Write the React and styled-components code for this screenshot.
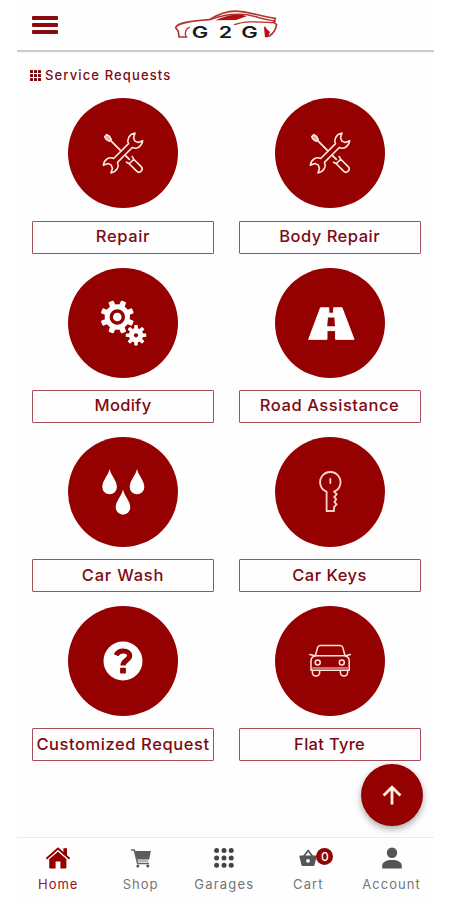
import React from "react";
import styled, { createGlobalStyle } from "styled-components";

const RED = "#950000";
const TEXT_RED = "#7d0a12";

const GlobalStyle = createGlobalStyle`
  * { box-sizing: border-box; }
  body { margin: 0; background: #fff; font-family: Inter, "Noto Sans", sans-serif; }
  button { font: inherit; border: 0; padding: 0; background: none; }
  svg { display: block; overflow: visible; }
`;

const Screen = styled.div`
  position: relative;
  width: 417px;
  height: 900px;
  margin-left: 17px;
  display: flex;
  flex-direction: column;
  background: #fefefe;
  overflow: hidden;
`;

const Header = styled.header`
  display: grid;
  grid-template-columns: 60px 1fr 60px;
  height: 52px;
  flex: none;
  padding-bottom: 1px;
  border-bottom: 2px solid #cbcbcb;
  box-shadow: 0 0 2px rgba(0, 0, 0, 0.12);
`;

const MenuButton = styled.button`
  display: flex;
  flex-direction: column;
  gap: 3.6px;
  padding: 16px 0 0 15px;
`;

const MenuBar = styled.span`
  width: 26px;
  height: 3.6px;
  border-radius: 1px;
  background: #8a0a12;
`;

const LogoBox = styled.div`
  justify-self: center;
  padding: 8px 0 0 2px;
`;

const SectionTitle = styled.h1`
  display: flex;
  align-items: center;
  gap: 4px;
  margin: 0;
  height: 46.4px;
  padding: 0 0 0 13px;
  font-size: 13px;
  font-weight: 500;
  letter-spacing: 1.13px;
  color: ${TEXT_RED};
`;

const Services = styled.main`
  display: grid;
  grid-template-columns: 182px 182px;
  column-gap: 24.6px;
  grid-auto-rows: 169.2px;
  padding-left: 15px;
  flex: 1;
`;

const Service = styled.section`
  display: flex;
  flex-direction: column;
  align-items: center;
  gap: 12.5px;
`;

const Disc = styled.button`
  display: flex;
  align-items: center;
  justify-content: center;
  width: 110px;
  height: 110px;
  border-radius: 50%;
  background: ${RED};
  color: #fff;
`;

const ServiceLabel = styled.div`
  display: flex;
  align-items: center;
  justify-content: center;
  width: 182px;
  height: 33px;
  padding-bottom: 2px;
  border: 1px solid #a5505a;
  border-radius: 1px;
  font-size: 16.5px;
  font-weight: 500;
  line-height: 1;
  white-space: nowrap;
  color: ${TEXT_RED};
  letter-spacing: ${(p) => p.$tracking}px;
`;

const UpButton = styled.button`
  position: absolute;
  left: 344px;
  top: 764px;
  width: 62px;
  height: 62px;
  display: flex;
  align-items: center;
  justify-content: center;
  border-radius: 50%;
  background: ${RED};
  box-shadow: 0 3px 7px rgba(0, 0, 0, 0.35);
`;

const TabBar = styled.nav`
  display: grid;
  grid-template-columns: 82.4px 82.4px 85px 83.2px 83.2px;
  height: 63px;
  flex: none;
  border-top: 1.5px solid #ececec;
`;

const Tab = styled.div`
  display: flex;
  flex-direction: column;
  align-items: center;
  gap: 6px;
  padding-top: 8px;
  font-size: 13px;
  line-height: 16px;
  letter-spacing: ${(p) => p.$tracking}px;
  color: ${(p) => (p.$active ? "#93141b" : "#757575")};
`;

const TabIcon = styled.div`
  position: relative;
  display: flex;
  align-items: center;
  justify-content: center;
  width: 26px;
  height: 24px;
`;

const Badge = styled.span`
  position: absolute;
  left: 21px;
  top: 2px;
  width: 17px;
  height: 17px;
  border-radius: 50%;
  background: #8e0606;
  color: #fff;
  font-size: 12px;
  font-weight: 500;
  line-height: 17px;
  letter-spacing: 0;
  text-align: center;
`;

/* Service glyphs share a frame whose origin is the middle of the disc. */
const Glyph = ({ children }) => (
  <svg width="52" height="52" viewBox="-26 -26 52 52" fill="none">
    {children}
  </svg>
);

const ToolsIcon = () => (
  <Glyph>
    <g stroke="#ffe9df" strokeWidth="1.6" strokeLinejoin="round" strokeLinecap="round">
      <g transform="rotate(45)">
        <path d="M-24.4 -1.5L-21.5 -2.2L-18 -1.3V1.3L-21.5 2.2L-24.4 1.5Z" fill="#e5a79f" />
        <path d="M-17 0H-4M4 0H9" strokeWidth="1.8" />
        <path d="M9 -4L12 -3.2H22.5A3.2 3.2 0 0 1 22.5 3.2H12L9 4M12 -3.2V3.2" />
      </g>
      <g transform="rotate(-45)">
        <path
          fill={RED}
          d="M-10.5 -2.7H10.5C12 -7 17.5 -9 22.6 -5.6L18.2 -3.3L16.8 0L18.2 3.3L22.6 5.2C17.5 9 12 7 10.5 2.7H-10.5C-12 7 -17.5 9 -22.6 5.6L-18.2 3.3L-16.8 0L-18.2 -3.3L-22.6 -5.2C-17.5 -9 -12 -7 -10.5 -2.7Z"
        />
      </g>
    </g>
  </Glyph>
);

const Gear = ({ x, y, body, reach, tooth, turn }) => (
  <g transform={`translate(${x} ${y}) rotate(${turn})`} fill="#fff">
    <circle r={body} />
    {[0, 45, 90, 135, 180, 225, 270, 315].map((angle) => (
      <rect
        key={angle}
        x={-tooth / 2}
        y={-reach}
        width={tooth}
        height={reach - body + 2}
        rx={tooth / 5}
        transform={`rotate(${angle})`}
      />
    ))}
  </g>
);

const GearsIcon = () => (
  <Glyph>
    <Gear x={-5.7} y={-6} body={12.6} reach={16.8} tooth={5.6} turn={22.5} />
    <circle cx="-5.7" cy="-6" r="6" stroke={RED} strokeWidth="3.4" />
    <Gear x={13} y={12.3} body={7.2} reach={10.2} tooth={3.6} turn={0} />
    <circle cx="13" cy="12.3" r="2.1" fill={RED} />
  </Glyph>
);

const RoadIcon = () => (
  <Glyph>
    <path
      fill="#fff"
      stroke="#fff"
      strokeWidth="1"
      strokeLinejoin="round"
      d="M-9.5 -15.2H-1.2V-9.8H3.6V-15.2H12L24 16.3H5.6V7.6H-3V16.3H-21.3Z"
    />
    <path fill={RED} d="M-2 -5.4H4.4L5 3.3H-2.8Z" />
  </Glyph>
);

const Drop = ({ x, y }) => (
  <path
    fill="#fff"
    transform={`translate(${x} ${y})`}
    d="M0 0C1.3 6.5 7.3 11.5 7.3 18A7.3 7.3 0 0 1 -7.3 18C-7.3 11.5 -1.3 6.5 0 0Z"
  />
);

const DropsIcon = () => (
  <Glyph>
    <Drop x={-13.4} y={-23} />
    <Drop x={14} y={-23} />
    <Drop x={0} y={-2.6} />
  </Glyph>
);

const KeyIcon = () => (
  <Glyph>
    <g stroke="#fbd5d0" strokeWidth="1.8" strokeLinejoin="round" strokeLinecap="round">
      <path d="M-3.4 -0.3A10.2 10.2 0 1 1 4 -0.3L6.8 2.2L4.2 5.2L6.2 7.2L4.4 10L6.6 12.4L4 15.2V19H-3.4Z" />
      <path d="M0.3 -13V-9" />
    </g>
  </Glyph>
);

const QuestionIcon = () => (
  <Glyph>
    <circle r="19.5" fill="#fff" />
    <path
      d="M-6.8 -5.8C-5.2 -9.6 -2.8 -10 0.3 -10C4 -10 6.6 -8.2 6.6 -5.2C6.6 -0.8 0 -1 0 4.6"
      stroke={RED}
      strokeWidth="5.2"
    />
    <rect x="-2.9" y="6.8" width="5.8" height="5.6" rx="0.6" fill={RED} />
  </Glyph>
);

const CarIcon = () => (
  <Glyph>
    <g stroke="#ffe4dc" strokeWidth="1.5" strokeLinejoin="round" strokeLinecap="round">
      <path d="M-14.6 -5.2L-12.4 -13.6Q-11.8 -15.6 -9.8 -15.6H10.2Q12.2 -15.6 12.8 -13.6L15 -5.2" />
      <path d="M-20.2 -6.4L-15 -5.2H15.4L20.4 -6.4" />
      <path d="M-15 -5.2Q-19 -3.8 -19 0V9.2H19.2V0Q19.2 -3.8 15.4 -5.2" />
      <path d="M-17.4 7H17.6" strokeWidth="1" />
      <path d="M-17.6 9.4V11.6Q-17.6 15 -14 15Q-10.4 15 -10.4 11.6V9.4M10.4 9.4V11.6Q10.4 15 14 15Q17.6 15 17.6 11.6V9.4" />
      <circle cx="-12.3" cy="1.4" r="2.5" />
      <circle cx="11.8" cy="1.4" r="2.5" />
    </g>
  </Glyph>
);

const Logo = () => (
  <svg width="106" height="32" viewBox="72 26 318 96" fill="none">
    <g stroke="#b5332f" strokeWidth="5" strokeLinejoin="round" strokeLinecap="round">
      <path d="M110 113H87L85 96L77 85C82 72 110 66 178 61C215 38 240 33 268 36C305 39 335 52 376 57L371 69L380 76C377 92 368 104 358 110L347 112L345 84" />
      <path d="M108 112C103 100 108 88 118 84" strokeWidth="4" />
      <path d="M180 61C232 42 285 40 330 56L376 66" strokeWidth="4" />
      <path d="M254 76C285 63 330 68 371 70" strokeWidth="4" />
    </g>
    <path fill="#b3100f" d="M196 63C222 50 250 44 278 47L290 51L258 62Z" />
    <path fill="#b3100f" d="M343 82L360 98L354 112H346Z" />
    <g fill="#1b1b1b" fontFamily="Inter, sans-serif" fontSize="48" fontWeight="600">
      <text transform="translate(125 115) scale(1.38 1)">G</text>
      <text transform="translate(206 115) scale(1.34 1)">2</text>
      <text transform="translate(274 115) scale(1.38 1)">G</text>
    </g>
  </svg>
);

const TitleGridIcon = () => (
  <svg width="11" height="11" viewBox="0 0 11 11" fill="#7d0a12">
    {[0, 4, 8].map((y) =>
      [0, 4, 8].map((x) => <rect key={`${x}-${y}`} x={x} y={y} width="3" height="3" rx="0.5" />)
    )}
  </svg>
);

const HouseIcon = () => (
  <svg width="24" height="22" viewBox="0 0 24 22" fill="none">
    <path fill={RED} d="M17.4 1.2H21V8H17.4Z" />
    <path fill={RED} d="M12 4.6L20.4 12V20.6Q20.4 21.6 19.4 21.6H14.4V14.6H9.6V21.6H4.2Q3.2 21.6 3.2 20.6V12Z" />
    <path
      d="M1 11.2L12 1.6L23 11.2"
      stroke={RED}
      strokeWidth="2"
      strokeLinecap="round"
      strokeLinejoin="round"
    />
    <path d="M2.6 12L12 3.9L21.4 12" stroke="#fefefe" strokeWidth="1" />
  </svg>
);

const CartIcon = () => (
  <svg width="22" height="20" viewBox="0 0 22 20" fill="none">
    <path d="M1 2H4.3L7.6 15.4H19" stroke="#666" strokeWidth="1.5" />
    <path d="M4.8 3H20.8L19.2 11.6H7Z" fill="#5c5c5c" />
    <path d="M6.6 13H18.4" stroke="#777" strokeWidth="1" />
    <circle cx="7.8" cy="18" r="1.5" fill="#555" />
    <circle cx="17.8" cy="18" r="1.5" fill="#555" />
  </svg>
);

const DotsIcon = () => (
  <svg width="20" height="20" viewBox="0 0 20 20" fill="#444">
    {[2.6, 10, 17.2].map((y) =>
      [2.6, 10, 17.2].map((x) => <circle key={`${x}-${y}`} cx={x} cy={y} r="2.5" />)
    )}
  </svg>
);

const BasketIcon = () => (
  <svg width="18" height="18" viewBox="0 0 18 18" fill="none">
    <path d="M4.6 7.4L9.2 1.4L13.6 7.4" stroke="#555" strokeWidth="1.7" strokeLinejoin="round" />
    <path
      fill="#555"
      d="M1.2 6.6H16.8Q17.8 6.6 17.6 7.6L15.6 15.8Q15.3 17 14 17H4Q2.7 17 2.4 15.8L0.4 7.6Q0.2 6.6 1.2 6.6Z"
    />
    <circle cx="9" cy="11.8" r="1.9" fill="#fefefe" />
  </svg>
);

const PersonIcon = () => (
  <svg width="20" height="22" viewBox="0 0 20 22" fill="#555">
    <circle cx="10" cy="5.7" r="5.2" />
    <path d="M0.2 21.4V19C0.2 14.8 4.5 13 10 13S19.8 14.8 19.8 19V21.4Z" />
  </svg>
);

const ArrowUp = () => (
  <svg width="20" height="20" viewBox="0 0 20 20" fill="none" stroke="#fff1e6" strokeWidth="2.8">
    <path d="M10 19.4V2M1.6 10.4L10 2.2L18.4 10.4" />
  </svg>
);

const services = [
  { name: "Repair", icon: ToolsIcon, tracking: 0.65 },
  { name: "Body Repair", icon: ToolsIcon, tracking: 0.5 },
  { name: "Modify", icon: GearsIcon, tracking: 0.3 },
  { name: "Road Assistance", icon: RoadIcon, tracking: 0.55 },
  { name: "Car Wash", icon: DropsIcon, tracking: 0.8 },
  { name: "Car Keys", icon: KeyIcon, tracking: 0.5 },
  { name: "Customized Request", icon: QuestionIcon, tracking: 0.57 },
  { name: "Flat Tyre", icon: CarIcon, tracking: 0.3 },
];

const tabs = [
  { name: "Home", icon: <HouseIcon />, tracking: 0.95, active: true },
  { name: "Shop", icon: <CartIcon />, tracking: 0.95 },
  { name: "Garages", icon: <DotsIcon />, tracking: 1.2 },
  { name: "Cart", icon: <BasketIcon />, tracking: 1.1, count: 0 },
  { name: "Account", icon: <PersonIcon />, tracking: 1.05 },
];

export default function App() {
  return (
    <>
      <GlobalStyle />
      <Screen>
        <Header>
          <MenuButton aria-label="Menu">
            <MenuBar />
            <MenuBar />
            <MenuBar />
          </MenuButton>
          <LogoBox>
            <Logo />
          </LogoBox>
        </Header>
        <SectionTitle>
          <TitleGridIcon />
          Service Requests
        </SectionTitle>
        <Services>
          {services.map(({ name, icon: Icon, tracking }) => (
            <Service key={name}>
              <Disc aria-label={name}>
                <Icon />
              </Disc>
              <ServiceLabel $tracking={tracking}>{name}</ServiceLabel>
            </Service>
          ))}
        </Services>
        <TabBar>
          {tabs.map(({ name, icon, tracking, active, count }) => (
            <Tab key={name} $active={active} $tracking={tracking}>
              <TabIcon>
                {icon}
                {count !== undefined && <Badge>{count}</Badge>}
              </TabIcon>
              {name}
            </Tab>
          ))}
        </TabBar>
        <UpButton aria-label="Back to top">
          <ArrowUp />
        </UpButton>
      </Screen>
    </>
  );
}
